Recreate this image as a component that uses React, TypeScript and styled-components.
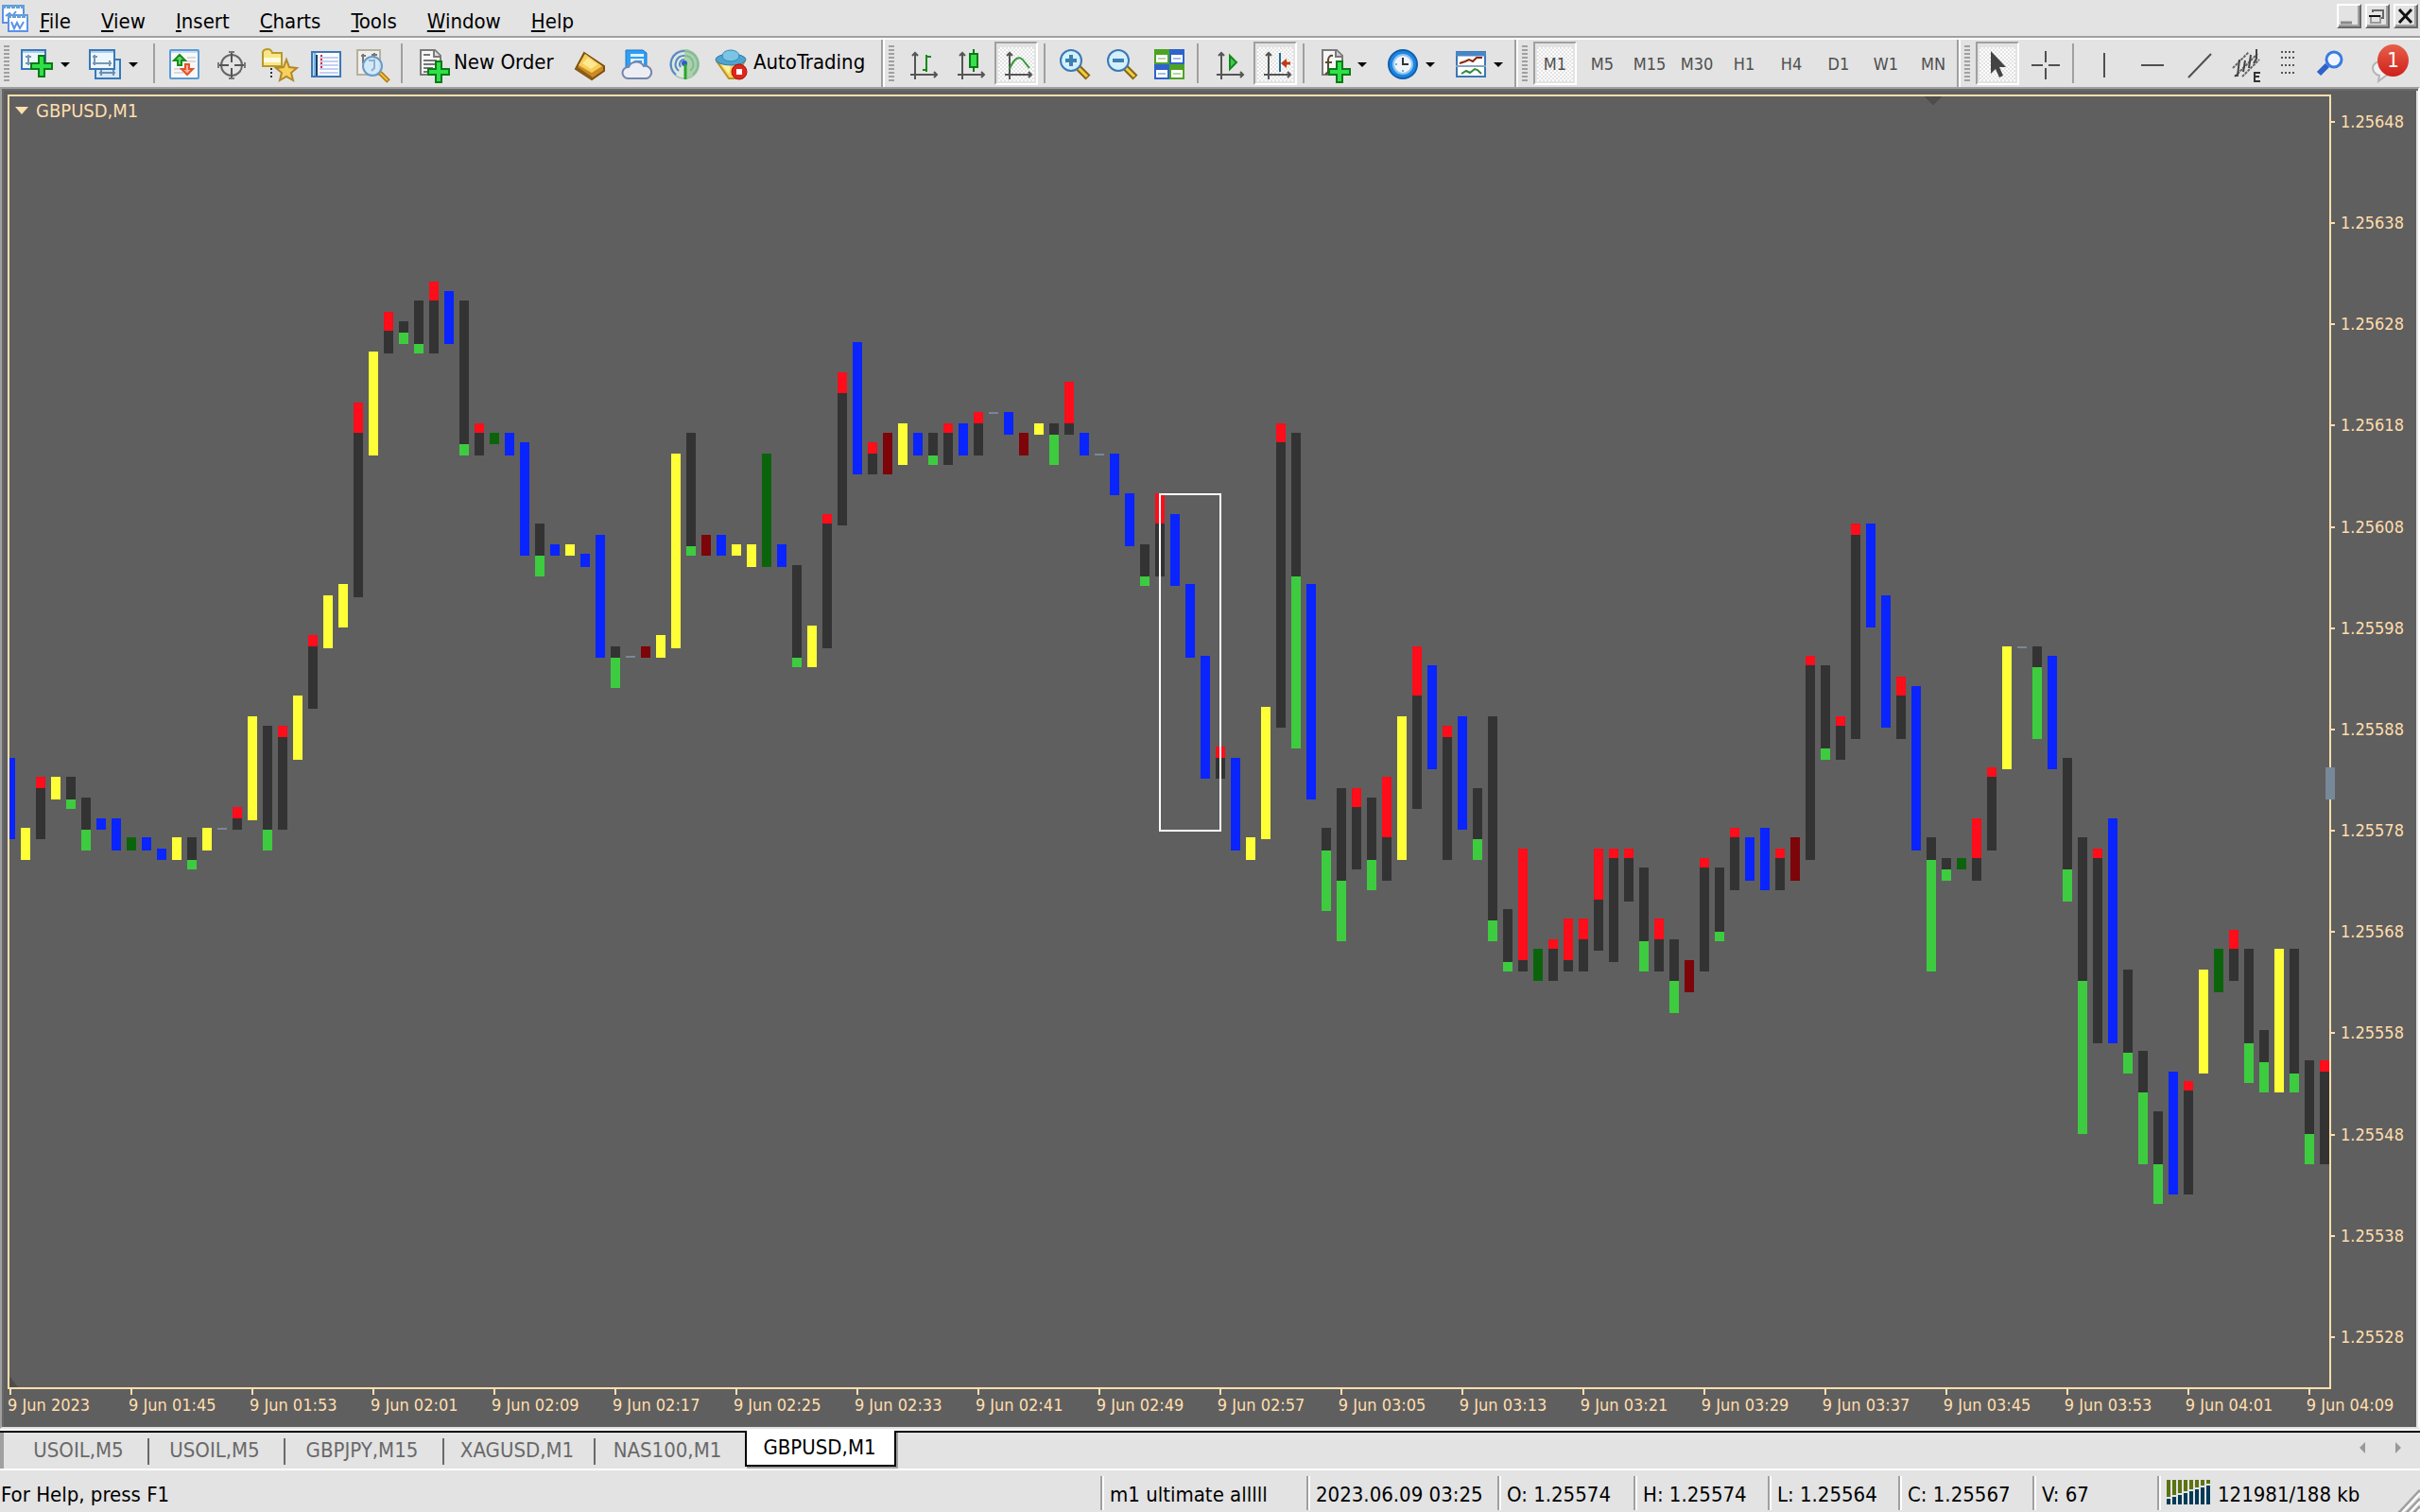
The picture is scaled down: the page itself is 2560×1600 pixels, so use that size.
import React from "react";
import styled, { createGlobalStyle, css } from "styled-components";

const color = {
  face: "#e3e3e3",
  shadow: "#a0a0a0",
  deep: "#696969",
  chart: "#5f5f5f",
  axis: "#ffdead",
  handle: "#778899",
};

const GlobalStyle = createGlobalStyle`
  * { box-sizing: border-box; }
  body { margin: 0; background: ${color.face}; }
  body, button {
    font-family: "DejaVu Sans Condensed", "DejaVu Sans", Tahoma, sans-serif;
    font-size: 22px;
    line-height: 26px;
    color: #000;
  }
  button { border: 0; margin: 0; padding: 0; background: none; white-space: nowrap; }
`;

const Shell = styled.div`
  display: flex;
  flex-direction: column;
  min-height: 100vh;
  background: ${color.face};
`;

/* ---------- menu bar ---------- */

const MenuBar = styled.header`
  display: flex;
  align-items: flex-start;
  height: 42px;
  border-bottom: 2px solid #fff;
  box-shadow: inset 0 -2px 0 ${color.shadow};
`;

const AppIcon = styled.svg`
  width: 32px;
  height: 32px;
  margin-top: 3px;
  margin-right: -6px;
  flex: none;
`;

const MenuNav = styled.nav`
  display: flex;
  flex: 1;
  padding-top: 10px;
`;

const MenuItem = styled.button`
  padding: 0 16px;
  &::first-letter {
    text-decoration: underline;
    text-decoration-thickness: 2px;
    text-underline-offset: 2px;
  }
`;

const WindowButtons = styled.div`
  display: flex;
  gap: 4px;
  padding: 4px 2px 0 0;
`;

const WindowButton = styled.button`
  width: 26px;
  height: 26px;
  border: 2px solid;
  border-color: #fff ${color.deep} ${color.deep} #fff;
  box-shadow: inset -2px -2px 0 ${color.shadow};
  display: flex;
  svg { width: 22px; height: 22px; }
`;

/* ---------- toolbar ---------- */

const ToolBar = styled.div`
  display: flex;
  height: 50px;
`;

const ToolGroup = styled.div<{ $last?: boolean }>`
  display: flex;
  align-items: center;
  gap: 4px;
  padding: 0 2px 0 4px;
  border-left: 2px solid #fff;
  border-right: 2px solid ${color.shadow};
  &:first-child { border-left: 0; }
  ${(p) => p.$last && css`flex: 1; border-right: 0;`}
`;

const Gripper = styled.span`
  width: 6px;
  height: 38px;
  margin-right: 2px;
  background: repeating-linear-gradient(${color.shadow} 0 2px, transparent 2px 4px);
`;

const Separator = styled.span`
  width: 2px;
  height: 42px;
  margin: 0 4px 0 2px;
  background: ${color.shadow};
`;

const pressed = css`
  border-color: ${color.shadow} #fff #fff ${color.shadow};
  background: conic-gradient(#fff 25%, ${color.face} 0 50%, #fff 0 75%, ${color.face} 0) 0 0 / 4px 4px content-box;
`;

const ToolButton = styled.button<{ $pressed?: boolean; $width?: number }>`
  display: flex;
  align-items: center;
  justify-content: center;
  width: ${(p) => p.$width ?? 46}px;
  height: 46px;
  border: 2px solid transparent;
  padding: 4px 2px 2px;
  font-size: 18px;
  color: #4f4f4f;
  ${(p) => p.$pressed && pressed}
`;

const DropButton = styled.button`
  display: flex;
  align-items: center;
  gap: 8px;
  width: 68px;
  height: 46px;
  padding: 2px 0 0 8px;
`;

const Caret = styled.span`
  border: 5px solid transparent;
  border-top-color: #000;
  border-bottom-width: 0;
`;

const TextButton = styled.button<{ $width: number }>`
  display: flex;
  align-items: center;
  gap: 6px;
  width: ${(p) => p.$width}px;
  height: 46px;
  padding: 2px 0 0 8px;
  span { margin-bottom: 4px; }
`;

const Glyph = styled.svg`
  width: 32px;
  height: 32px;
  flex: none;
  overflow: visible;
`;

/* ---------- chart ---------- */

const ChartPane = styled.main`
  flex: 1;
  display: grid;
  grid-template-columns: minmax(0, 1fr) 92px;
  grid-template-rows: minmax(0, 1fr) 40px;
  padding: 6px 0 0 6px;
  background: ${color.chart};
  border: 2px solid;
  border-color: ${color.shadow} #fff ${color.face} ${color.shadow};
  box-shadow: inset 2px 2px 0 ${color.deep}, inset -2px 0 0 ${color.face};
`;

const Plot = styled.section`
  position: relative;
  border: 2px solid ${color.axis};
`;

const PlotCanvas = styled.svg`
  position: absolute;
  inset: 0;
  width: 100%;
  height: 100%;
`;

const ChartTitle = styled.div`
  position: absolute;
  left: 6px;
  top: 2px;
  display: flex;
  align-items: center;
  gap: 8px;
  font-size: 20px;
  line-height: 26px;
  color: ${color.axis};
  &::before {
    content: "";
    border: 7px solid transparent;
    border-top: 8px solid ${color.axis};
    border-bottom-width: 0;
  }
`;

const AxisHandle = styled.span`
  position: absolute;
  right: -6px;
  top: 52%;
  width: 10px;
  height: 34px;
  background: ${color.handle};
`;

const PriceAxis = styled.div`
  display: flex;
  flex-direction: column;
  justify-content: space-between;
  padding: 20px 0 46px;
`;

const PriceLabel = styled.span`
  display: flex;
  align-items: center;
  gap: 6px;
  height: 18px;
  font-size: 18px;
  line-height: 18px;
  color: ${color.axis};
  &::before {
    content: "";
    width: 4px;
    height: 2px;
    background: ${color.axis};
  }
`;

const TimeAxis = styled.div`
  grid-column: 1 / -1;
  display: flex;
`;

const TimeLabel = styled.span`
  flex: 0 0 calc((100% - 96px) * 128 / 2454);
  font-size: 18px;
  line-height: 22px;
  white-space: nowrap;
  color: ${color.axis};
  &::before {
    content: "";
    display: block;
    width: 2px;
    height: 6px;
    margin-left: 2px;
    background: ${color.axis};
  }
`;

/* ---------- tabs and status ---------- */

const TabStrip = styled.nav`
  display: flex;
  align-items: flex-start;
  height: 44px;
  border-top: 2px solid #fff;
  border-bottom: 2px solid #fff;
  padding-left: 14px;
  box-shadow: inset 0 2px 0 #000, inset 4px 0 0 ${color.shadow};
`;

const Tab = styled.button<{ $width: number; $active?: boolean }>`
  width: ${(p) => p.$width}px;
  height: 28px;
  margin-top: 8px;
  padding: 0 4px 4px 0;
  color: ${color.deep};
  border-right: 2px solid ${color.deep};
  ${(p) =>
    p.$active &&
    css`
      height: 38px;
      margin-top: 0;
      padding: 0 2px 0 0;
      color: #000;
      background: #fff;
      border: 2px solid #000;
      border-top: 0;
      box-shadow: 2px 2px 0 ${color.shadow};
    `}
  &:nth-child(5) { border-right-color: transparent; }
`;

const TabScroll = styled.div`
  display: flex;
  gap: 32px;
  margin: 12px 20px 0 auto;
`;

const ScrollArrow = styled.button<{ $right?: boolean }>`
  width: 6px;
  height: 12px;
  background: #999;
  clip-path: ${(p) => (p.$right ? "polygon(0 0, 100% 50%, 0 100%)" : "polygon(100% 0, 0 50%, 100% 100%)")};
`;

const StatusBar = styled.footer`
  display: flex;
  align-items: flex-start;
  height: 44px;
  padding-top: 6px;
`;

const Hint = styled.span`
  flex: 1;
  padding: 7px 0 0 1px;
`;

const StatusCell = styled.span<{ $width: number }>`
  display: flex;
  gap: 6px;
  width: ${(p) => p.$width}px;
  height: 36px;
  padding: 7px 0 0 8px;
  border-left: 2px solid ${color.shadow};
  box-shadow: inset 2px 0 0 #fff;
  white-space: nowrap;
`;

const Meter = styled.svg`
  width: 48px;
  height: 26px;
  margin-top: -3px;
  flex: none;
`;

const SizeGrip = styled.svg`
  width: 30px;
  height: 32px;
  margin: 6px 0 0 auto;
  flex: none;
`;

/* ---------- data ---------- */

const menus = ["File", "View", "Insert", "Charts", "Tools", "Window", "Help"];
const timeframes = ["M1", "M5", "M15", "M30", "H1", "H4", "D1", "W1", "MN"];
const tabs: [string, number][] = [
  ["USOIL,M5", 144],
  ["USOIL,M5", 144],
  ["GBPJPY,M15", 168],
  ["XAGUSD,M1", 160],
  ["NAS100,M1", 158],
  ["GBPUSD,M1", 160],
];
const cells: [string, number][] = [
  ["m1 ultimate alllll", 218],
  ["2023.06.09 03:25", 202],
  ["O: 1.25574", 144],
  ["H: 1.25574", 142],
  ["L: 1.25564", 138],
  ["C: 1.25567", 142],
  ["V: 67", 132],
];
const prices = Array.from({ length: 13 }, (_, i) => `1.25${648 - i * 10}`);
const times = [
  "2023", "01:45", "01:53", "02:01", "02:09", "02:17", "02:25", "02:33", "02:41", "02:49",
  "02:57", "03:05", "03:13", "03:21", "03:29", "03:37", "03:45", "03:53", "04:01", "04:09",
];

/* One entry per minute, prices in points above 1.25000.
   B/Y/D/M: high low. R/G: high, wick boundary, low. N: a single price. */
const bars = `
B585,577 Y578,575 R583,582,577 Y583,581 G583,581,580 G581,578,576 B579,578 B579,576 D577,576 B577,576
B576,575 Y577,575 G577,575,574 Y578,576 N578 R580,579,578 Y589,579 G588,578,576 R588,587,578 Y591,585
R597,596,590 Y601,596 Y602,598 R620,617,601 Y625,615 R629,627,625 G628,627,626 G630,626,625 R632,630,625 B631,626
G630,616,615 R618,617,615 D617,616 B617,615 B616,605 G608,605,603 B606,605 Y606,605 B605,604 B607,595
G596,595,592 N595 M596,595 Y597,595 Y615,596 G617,606,605 M607,605 B607,605 Y606,605 Y606,604
D615,604 B606,604 G604,595,594 Y598,594 R609,608,596 R623,621,608 B626,613 R616,615,613 M617,613 Y618,614
B617,615 G617,615,614 R618,617,614 B618,615 R619,618,615 N619 B619,617 M617,615 Y618,617 G618,617,614
R622,618,617 B617,615 N615 B615,611 B611,606 G606,603,602 R611,608,603 B609,602 B602,595 B595,583
R586,585,583 B585,576 Y577,575 Y590,577 R618,616,588 G617,603,586 B602,581 G578,576,570 G582,573,567 R582,580,574
G581,575,572 R583,577,573 Y589,575 R596,591,580 B594,584 R588,587,575 B589,578 G582,577,575 G589,569,567 G570,565,564
R576,565,564 D566,563 R567,566,563 R569,565,564 R569,567,564 R576,571,566 R576,575,565 R576,575,571 G574,567,564 R569,567,564
G567,563,560 M565,562 R575,574,564 G574,568,567 R578,577,572 B577,573 B578,572 R576,575,572 M577,573 R595,594,575
G594,586,585 R589,588,585 R608,607,587 B608,598 B601,588 R593,591,587 B592,576 G577,575,564 G575,574,573 D575,574
R579,575,573 R584,583,576 Y596,584 N596 G596,594,587 B595,584 G585,574,571 G577,563,548 R576,575,557 B579,557
G564,556,554 G556,552,545 G550,545,541 B554,542 R553,552,542 Y564,554 D566,562 R568,566,563 G566,557,553 G558,555,552
Y566,552 G566,554,552 G555,548,545 R555,554,545
`.trim().split(/\s+/);

const paint: Record<string, string> = {
  B: "#0a24ff", Y: "#ffff38", D: "#0b640c", M: "#7d0408", N: color.handle, R: "#ff0d1a", G: "#3dcc3f",
};
const wickBody = "#333333";

const rowTop = (points: number) => 2 * Math.floor(277.75 + (608 - points) * 5.36) - 102;

function Bar({ code, index }: { code: string; index: number }) {
  const kind = code[0];
  const p = code.slice(1).split(",").map(Number);
  const x = index * 16 - 4;
  const top = rowTop(p[0]);
  const bottom = rowTop(p[p.length - 1]) + 2;
  if (p.length < 3) return <rect x={x} y={top} width={10} height={bottom - top} fill={paint[kind]} />;
  const split = kind === "R" ? rowTop(p[1]) : rowTop(p[1]) + 2;
  return (
    <>
      <rect x={x} y={top} width={10} height={split - top} fill={kind === "R" ? paint.R : wickBody} />
      <rect x={x} y={split} width={10} height={bottom - split} fill={kind === "R" ? wickBody : paint.G} />
    </>
  );
}

/* ---------- icons ---------- */

const Plus = ({ x, y }: { x: number; y: number }) => (
  <path
    transform={`translate(${x} ${y})`}
    d="M9 1h6v8h8v6h-8v8h-6v-8h-8v-6h8z"
    fill="#2fe048"
    stroke="#0b7a17"
    strokeWidth="2"
  />
);

const Axes = ({ children }: { children: React.ReactNode }) => (
  <g transform="translate(4 0)">
    <path d="M5 4v28M0 27h28M2 7l3-3 3 3M25 24l3 3-3 3" stroke="#555" strokeWidth="2" fill="none" />
    {children}
  </g>
);

const Lens = ({ minus }: { minus?: boolean }) => (
  <>
    <path d="M20 20l10 10" stroke="#8a6512" strokeWidth="7" />
    <path d="M20 20l9 9" stroke="#f0cf3e" strokeWidth="3" />
    <circle cx="12" cy="12" r="11" fill="#d3f0ff" stroke="#3a78b5" strokeWidth="2" />
    <path d={minus ? "M6 12h12" : "M6 12h12M12 6v12"} stroke="#3f80ad" strokeWidth="4" />
  </>
);

const icons: Record<string, React.ReactNode> = {
  newChart: (
    <>
      <rect x="-1" y="1" width="25" height="20" fill="#eef6fd" stroke="#3a78b5" strokeWidth="2" />
      <path d="M-2 1h27" stroke="#3a78b5" strokeWidth="2" />
      <path d="M0 3h23" stroke="#a9d0f2" strokeWidth="2" />
      <path d="M6 6v11M3 8h6M3 15h8" stroke="#7797b3" strokeWidth="2" />
      <Plus x={8} y={6} />
    </>
  ),
  profiles: (
    <>
      <rect x="5" y="11" width="26" height="20" fill="#d6e8f8" stroke="#3a78b5" strokeWidth="2" />
      <path d="M9 25h17M11 22v6M24 22v6" stroke="#6d8fae" strokeWidth="2" />
      <rect x="-1" y="1" width="26" height="20" fill="#eef6fd" stroke="#3a78b5" strokeWidth="2" />
      <path d="M0 3h24" stroke="#a9d0f2" strokeWidth="2" />
      <path d="M4 6v11M2 15h20M20 12v6M2 8h5" stroke="#7797b3" strokeWidth="2" />
    </>
  ),
  marketWatch: (
    <>
      <rect x="1" y="1" width="30" height="30" rx="1" fill="#f8f8f8" stroke="#5b9bd5" strokeWidth="2" />
      <path d="M2 3h28" stroke="#c3def5" strokeWidth="2" />
      <path d="M5 21h8M5 25h10M19 9h9M19 13h9" stroke="#dadada" strokeWidth="2" />
      <path d="M11 6l6 6h-4v5h-4v-5H5z" fill="#5fd95f" stroke="#1d8a22" strokeWidth="2" />
      <path d="M19 27l-6-6h4v-5h4v5h4z" fill="#ffb09a" stroke="#e0542a" strokeWidth="2" />
    </>
  ),
  crosshair: (
    <g fill="none" stroke="#666" strokeWidth="2">
      <circle cx="16" cy="17" r="11" />
      <path d="M16 2v12M16 20v12M1 17h12M19 17h12" stroke="#555" />
      <path d="M13 3h6M13 31h6M2 14v6M30 14v6" stroke="#777" />
    </g>
  ),
  navigator: (
    <>
      <path d="M-1 8V3q1-3 5-3q4 0 5 4h10v14H-1z" fill="#f9e68a" stroke="#b89a28" strokeWidth="2" />
      <path d="M0 9h18v5H0z" fill="#fffbe0" />
      <path d="M8 20v12" stroke="#333" strokeWidth="2" strokeDasharray="2 2" />
      <path d="M24 11l3 8 8 1-6 5 2 8-7-4-7 4 2-8-6-5 8-1z" fill="#f6d25a" stroke="#b3872b" strokeWidth="2" />
    </>
  ),
  dataWindow: (
    <>
      <rect x="1" y="3" width="30" height="26" fill="#fff" stroke="#3a78b5" strokeWidth="2" />
      <path d="M4 4v24" stroke="#7fb4e6" strokeWidth="3" />
      <path d="M9 9h20M9 13h20M9 17h20M9 21h20M9 25h20" stroke="#c4d0f2" strokeWidth="2" />
      <path d="M6 6v22" stroke="#1b3d66" strokeWidth="2" />
      <path d="M11 6v15" stroke="#e0233a" strokeWidth="2" strokeDasharray="2 2" />
    </>
  ),
  tester: (
    <>
      <rect x="-1" y="1" width="24" height="26" fill="#f0efe9" stroke="#b5b1a0" strokeWidth="2" />
      <path d="M5 5v10M3 7h5M17 4v8M14 6h6" stroke="#777" strokeWidth="2" />
      <path d="M23 25l9 9" stroke="#b07a14" strokeWidth="5" />
      <path d="M23 25l8 8" stroke="#edc23a" strokeWidth="2" />
      <circle cx="15" cy="18" r="10" fill="#cde8fa" fillOpacity="0.85" stroke="#6a9bc9" strokeWidth="2" />
      <path d="M11 12h6v8l-3 3" fill="none" stroke="#8fb0cc" strokeWidth="2" />
    </>
  ),
  newOrder: (
    <>
      <path d="M3 1h15l6 6v20H3z" fill="#f7f7f7" stroke="#7a7a7a" strokeWidth="2" />
      <path d="M17 1v7h7" fill="#ddd" stroke="#7a7a7a" strokeWidth="2" />
      <path d="M6 6h7M6 12h14M6 16h14M6 20h10M6 24h6" stroke="#777" strokeWidth="2" />
      <Plus x={10} y={12} />
    </>
  ),
  gold: (
    <>
      <path d="M10 4l21 14v5L18 32 1 21z" fill="#c98b22" stroke="#7d4f12" strokeWidth="2" />
      <path d="M11 5l18 13-11 7L4 17z" fill="#f5cf57" />
      <path d="M14 9l10 7-7 5-9-6z" fill="#ffe893" />
      <path d="M2 20l16 11" stroke="#8f5c16" strokeWidth="3" />
    </>
  ),
  cloud: (
    <>
      <path d="M4 1h18l4 3v16H4z" fill="#2f9ff0" stroke="#1c78cc" strokeWidth="1" />
      <path d="M9 5h14v12H9z" fill="#dff2ff" />
      <path d="M9 9h14M13 13h8" stroke="#2f9ff0" strokeWidth="2" />
      <path d="M6 31a6 6 0 0 1 1-12 9 9 0 0 1 16-1 6 6 0 0 1 3 13z" fill="#eceef4" stroke="#7485ad" strokeWidth="2" />
    </>
  ),
  signals: (
    <>
      <circle cx="16" cy="16" r="15" fill="#dbeadb" stroke="#a8c3c0" strokeWidth="1.5" />
      <path d="M16 16V32a16 16 0 0 0 0-32" fill="#9ccc9c" fillOpacity="0.8" />
      <g fill="none" stroke="#5b86c9" strokeWidth="2">
        <path d="M16 2a14 14 0 0 0-9 25M16 7a9 9 0 0 0-6 16M16 11a5 5 0 0 0-4 8" />
        <path d="M16 2a14 14 0 0 1 9 25M16 7a9 9 0 0 1 6 16" stroke="#86b79b" />
      </g>
      <circle cx="16" cy="15" r="3" fill="#2c5fc4" />
      <path d="M17 16v16" stroke="#2aa52f" strokeWidth="3" />
    </>
  ),
  autoTrading: (
    <>
      <path d="M0 14h28l-9 17h-7z" fill="#f6d65c" stroke="#b99426" strokeWidth="2" />
      <path d="M4 16h10l-2 10z" fill="#fff0a8" />
      <ellipse cx="14" cy="11" rx="16" ry="6" fill="#4fa3cf" stroke="#2b7aa5" />
      <ellipse cx="14" cy="7" rx="9" ry="6" fill="#7cc4e6" stroke="#3489b5" />
      <circle cx="23" cy="24" r="8" fill="#e0261c" stroke="#a9140d" />
      <rect x="20" y="21" width="6" height="6" fill="#fff" />
    </>
  ),
  barChart: (
    <Axes>
      <path d="M17 6v18M17 8h5M13 22h4" stroke="#168a1c" strokeWidth="2" />
    </Axes>
  ),
  candles: (
    <Axes>
      <path d="M17 0v24" stroke="#0d7a14" strokeWidth="2" />
      <rect x="13" y="5" width="8" height="14" fill="#36e04c" stroke="#0d7a14" strokeWidth="2" />
    </Axes>
  ),
  line: (
    <Axes>
      <path d="M5 21q8-19 16-7l5 6" fill="none" stroke="#3a9a40" strokeWidth="2" />
    </Axes>
  ),
  zoomIn: <Lens />,
  zoomOut: <Lens minus />,
  tiles: (
    <>
      <path d="M0 0h16v16H0z" fill="#4ca323" />
      <path d="M16 0h16v16H16z" fill="#2f62cc" />
      <path d="M0 16h16v16H0z" fill="#2f62cc" />
      <path d="M16 16h16v16H16z" fill="#4ca323" />
      <path d="M2 6h12v8H2zM18 6h12v8H18zM2 22h12v8H2zM18 22h12v8H18z" fill="#fff" />
      <path d="M4 10h8M20 26h8" stroke="#b5d9a0" strokeWidth="2" />
      <path d="M20 10h8M4 26h8" stroke="#a5bde8" strokeWidth="2" />
    </>
  ),
  autoScroll: (
    <Axes>
      <path d="M14 7l7 7-7 7z" fill="#49c552" stroke="#138a1c" strokeWidth="2" />
    </Axes>
  ),
  shift: (
    <Axes>
      <path d="M17 4v20" stroke="#236a96" strokeWidth="2" />
      <path d="M28 15h-6" stroke="#c43a12" strokeWidth="3" />
      <path d="M18 15l6-5v10z" fill="#c43a12" />
    </Axes>
  ),
  indicators: (
    <>
      <path d="M3 1h15l6 6v20H3z" fill="#f7f7f7" stroke="#7a7a7a" strokeWidth="2" />
      <path d="M17 1v7h7" fill="#ccc" stroke="#7a7a7a" strokeWidth="2" />
      <path d="M14 7q-4-1-5 4v12q0 3-3 3M6 14h7" fill="none" stroke="#5a4a30" strokeWidth="2" />
      <Plus x={9} y={12} />
    </>
  ),
  clock: (
    <>
      <circle cx="16" cy="16" r="15" fill="#1d86e0" stroke="#0f5fae" strokeWidth="2" />
      <circle cx="16" cy="16" r="10" fill="#eef4fa" stroke="#8fc4f2" strokeWidth="2" />
      <path d="M16 9v7h6" fill="none" stroke="#333" strokeWidth="2" />
      <path d="M16 22v2M8 16h2" stroke="#8aa" strokeWidth="2" />
    </>
  ),
  template: (
    <>
      <rect x="1" y="3" width="30" height="26" fill="#fff" stroke="#3a78b5" strokeWidth="2" />
      <path d="M0 5h32" stroke="#4787c6" strokeWidth="5" />
      <path d="M0 18h32" stroke="#8aa4c0" strokeWidth="2" />
      <path d="M4 15l6-2 4-2 4 2 4-4h6" fill="none" stroke="#8c2410" strokeWidth="2" />
      <path d="M6 26l5-3 4 2 5-4 3 1 4 4" fill="none" stroke="#2f8a35" strokeWidth="2" />
    </>
  ),
  pointer: <path d="M9 2v24l5-5 4 9 4-2-4-9h7z" fill="#444" />,
  cross: <path d="M17 2v12M17 20v12M2 17h12M20 17h12" stroke="#4f4f4f" strokeWidth="2" />,
  vline: <path d="M17 4v26" stroke="#4f4f4f" strokeWidth="2" />,
  hline: <path d="M6 17h24" stroke="#4f4f4f" strokeWidth="2" />,
  trend: <path d="M6 30L30 5" stroke="#4f4f4f" strokeWidth="2" />,
  channel: (
    <>
      <path d="M3 20L20 3M5 29L29 5M13 29L31 11" stroke="#666" strokeWidth="2" strokeDasharray="3 1" />
      <path d="M10 11l-2 17h-3M16 12l-2 12M22 6l-2 14M28 0v10l-3 5" fill="none" stroke="#444" strokeWidth="2" />
      <path d="M32 25h-6v9h6M26 29h5" fill="none" stroke="#333" strokeWidth="2" />
    </>
  ),
  more: (
    <path d="M9 3h14M9 9h14M9 17h14M9 25h14" stroke="#555" strokeWidth="2" strokeDasharray="2 2" />
  ),
  search: (
    <>
      <path d="M4 26l9-9" stroke="#2d62c9" strokeWidth="6" />
      <circle cx="20" cy="11" r="8" fill="#f0f6ff" stroke="#3a7be0" strokeWidth="3" />
    </>
  ),
};

const Icon = ({ name }: { name: string }) => (
  <Glyph viewBox="0 0 32 32" aria-hidden="true">
    {icons[name]}
  </Glyph>
);

const Tool = ({ name, label, on }: { name: string; label: string; on?: boolean }) => (
  <ToolButton $pressed={on} aria-label={label} aria-pressed={on}>
    <Icon name={name} />
  </ToolButton>
);

const Drop = ({ name, label }: { name: string; label: string }) => (
  <DropButton aria-label={label}>
    <Icon name={name} />
    <Caret />
  </DropButton>
);

const BadgeWrap = styled.span`
  position: relative;
  display: block;
  width: 46px;
  height: 42px;
`;

const Badge = styled.span`
  position: absolute;
  right: 0;
  top: 0;
  width: 33px;
  height: 34px;
  border-radius: 50%;
  background: linear-gradient(#e8604a, #cf1f1a);
  color: #fff;
  font-size: 22px;
  line-height: 34px;
  text-align: center;
`;

export default function App() {
  return (
    <Shell>
      <GlobalStyle />
      <MenuBar>
        <AppIcon viewBox="0 0 32 32" aria-hidden="true">
          <rect x="3" y="3" width="22" height="18" fill="#fff" stroke="#5b92e8" strokeWidth="2" />
          <path d="M2 4h24" stroke="#64a0d8" strokeWidth="4" strokeDasharray="4 1" />
          <path d="M6 14l4-3 3 3 4-5" fill="none" stroke="#5b92e8" strokeWidth="2" />
          <rect x="9" y="13" width="20" height="17" fill="#fff" stroke="#5b92e8" strokeWidth="2" />
          <path d="M8 14h22" stroke="#64a0d8" strokeWidth="4" strokeDasharray="4 1" />
          <path d="M12 20l3 7 3-6 3 6 4-7" fill="none" stroke="#5b92e8" strokeWidth="2" />
        </AppIcon>
        <MenuNav>
          {menus.map((m) => (
            <MenuItem key={m}>{m}</MenuItem>
          ))}
        </MenuNav>
        <WindowButtons>
          <WindowButton aria-label="Minimize">
            <svg viewBox="0 0 22 22"><path d="M2 18h12" stroke="#888" strokeWidth="3" /></svg>
          </WindowButton>
          <WindowButton aria-label="Restore">
            <svg viewBox="0 0 22 22">
              <path d="M6 7V5h11v8h-3" fill="none" stroke="#666" strokeWidth="2" />
              <path d="M4 11h10v7H4z" fill="none" stroke="#999" strokeWidth="2" />
              <path d="M2 11h12" stroke="#111" strokeWidth="2" />
            </svg>
          </WindowButton>
          <WindowButton aria-label="Close">
            <svg viewBox="0 0 22 22"><path d="M4 4l13 14M17 4L4 18" stroke="#111" strokeWidth="3" /></svg>
          </WindowButton>
        </WindowButtons>
      </MenuBar>

      <ToolBar>
        <ToolGroup>
          <Gripper />
          <Drop name="newChart" label="New chart" />
          <Drop name="profiles" label="Profiles" />
          <Separator />
          <Tool name="marketWatch" label="Market Watch" />
          <Tool name="crosshair" label="Data Window" />
          <Tool name="navigator" label="Navigator" />
          <Tool name="dataWindow" label="Terminal" />
          <Tool name="tester" label="Strategy Tester" />
          <Separator />
          <TextButton $width={163}>
            <Icon name="newOrder" />
            <span>New Order</span>
          </TextButton>
          <Tool name="gold" label="MetaEditor" />
          <Tool name="cloud" label="Hosting" />
          <Tool name="signals" label="Signals" />
          <TextButton $width={179}>
            <Icon name="autoTrading" />
            <span>AutoTrading</span>
          </TextButton>
        </ToolGroup>
        <ToolGroup>
          <Gripper />
          <Tool name="barChart" label="Bar Chart" />
          <Tool name="candles" label="Candlesticks" />
          <Tool name="line" label="Line Chart" on />
          <Separator />
          <Tool name="zoomIn" label="Zoom In" />
          <Tool name="zoomOut" label="Zoom Out" />
          <Tool name="tiles" label="Tile Windows" />
          <Separator />
          <Tool name="autoScroll" label="Auto Scroll" />
          <Tool name="shift" label="Chart Shift" on />
          <Separator />
          <Drop name="indicators" label="Indicators" />
          <Drop name="clock" label="Periods" />
          <Drop name="template" label="Templates" />
        </ToolGroup>
        <ToolGroup>
          <Gripper />
          {timeframes.map((t, i) => (
            <ToolButton key={t} $pressed={i === 0}>{t}</ToolButton>
          ))}
        </ToolGroup>
        <ToolGroup $last>
          <Gripper />
          <Tool name="pointer" label="Cursor" on />
          <Tool name="cross" label="Crosshair" />
          <Separator />
          <Tool name="vline" label="Vertical Line" />
          <Tool name="hline" label="Horizontal Line" />
          <Tool name="trend" label="Trendline" />
          <Tool name="channel" label="Equidistant Channel" />
          <ToolButton $width={36} aria-label="More"><Icon name="more" /></ToolButton>
          <Tool name="search" label="Search" />
          <ToolButton $width={66} aria-label="Notifications">
            <BadgeWrap>
              <Glyph viewBox="0 0 32 32" aria-hidden="true">
                <path d="M1 24a11 8 0 1 1 14 9l-8 6 1-6q-7-2-7-9z" fill="#f0f0f4" stroke="#b5b5b5" strokeWidth="2" />
              </Glyph>
              <Badge>1</Badge>
            </BadgeWrap>
          </ToolButton>
        </ToolGroup>
      </ToolBar>

      <ChartPane>
        <Plot>
          <PlotCanvas viewBox="0 0 2454 1366" preserveAspectRatio="none" shapeRendering="crispEdges">
            {bars.map((code, i) => (
              <Bar key={i} code={code} index={i} />
            ))}
            <rect
              x={1217}
              y={rowTop(611) + 1}
              width={64}
              height={rowTop(577.9) - rowTop(611)}
              fill="none"
              stroke="#fff"
              strokeWidth={2}
            />
            <path d="M2026 0h18l-9 10z" fill="#4d4d4d" />
            <path d="M0 1354l9 12H0z" fill="#4d4d4d" />
          </PlotCanvas>
          <ChartTitle>GBPUSD,M1</ChartTitle>
          <AxisHandle />
        </Plot>
        <PriceAxis>
          {prices.map((p) => (
            <PriceLabel key={p}>{p}</PriceLabel>
          ))}
        </PriceAxis>
        <TimeAxis>
          {times.map((t) => (
            <TimeLabel key={t}>9 Jun {t}</TimeLabel>
          ))}
        </TimeAxis>
      </ChartPane>

      <TabStrip>
        {tabs.map(([name, width], i) => (
          <Tab key={i} $width={width} $active={i === 5}>{name}</Tab>
        ))}
        <TabScroll>
          <ScrollArrow aria-label="Scroll left" />
          <ScrollArrow $right aria-label="Scroll right" />
        </TabScroll>
      </TabStrip>

      <StatusBar>
        <Hint>For Help, press F1</Hint>
        {cells.map(([text, width]) => (
          <StatusCell key={text} $width={width}>{text}</StatusCell>
        ))}
        <StatusCell $width={278}>
          <Meter viewBox="0 0 48 26" shapeRendering="crispEdges">
            {Array.from({ length: 8 }, (_, i) => (
              <g key={i}>
                <rect x={i * 6} y={0} width={4} height={18 - i * 2} fill="#5c7312" />
                <rect x={i * 6} y={20 - i * 2} width={4} height={6 + i * 2} fill="#003a57" />
              </g>
            ))}
          </Meter>
          121981/188 kb
          <SizeGrip viewBox="0 0 30 32">
            <path d="M2 32L30 2M10 32L30 11M18 32L30 19" stroke={color.shadow} strokeWidth="3" />
            <path d="M5 32L30 5M13 32L30 14M21 32L30 22" stroke="#fff" strokeWidth="2" />
          </SizeGrip>
        </StatusCell>
      </StatusBar>
    </Shell>
  );
}
